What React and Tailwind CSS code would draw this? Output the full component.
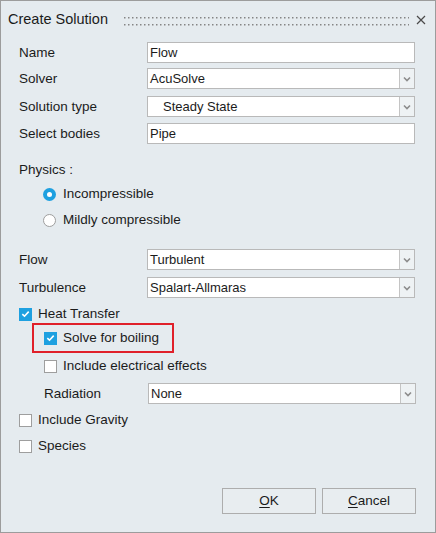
const font = { fontFamily: '"Liberation Sans", Arial, sans-serif' };

function Chevron() {
  return (
    <svg width="8" height="6" viewBox="0 0 8 6">
      <path d="M1 1.5 L4 4.5 L7 1.5" fill="none" stroke="#8c8c8c" strokeWidth="1.6" />
    </svg>
  );
}

function TextField({ value, className = '' }) {
  return (
    <div className={`flex h-[21px] w-[268px] items-center border border-[#b9b9b9] bg-white pl-[2px] text-[13px] text-[#1b1b1b] ${className}`}>
      {value}
    </div>
  );
}

function Select({ value, indent = false, className = '' }) {
  return (
    <div className={`flex h-[21px] w-[268px] border border-[#b9b9b9] bg-white text-[13px] text-[#1b1b1b] ${className}`}>
      <div className={`flex flex-1 items-center border-r border-[#c4c4c4] ${indent ? 'pl-[15px]' : 'pl-[2px]'}`}>{value}</div>
      <div className="flex w-[14px] items-center justify-center bg-[#eef2f4]">
        <Chevron />
      </div>
    </div>
  );
}

function Row({ label, children, className = '', labelW = 'w-[128px]' }) {
  return (
    <div className={`flex h-[21px] items-center ${className}`}>
      <div className={`${labelW} pt-[1px] text-[13.5px] leading-[16px] text-[#1b1b1b]`}>{label}</div>
      {children}
    </div>
  );
}

function Check({ checked }) {
  if (checked) {
    return (
      <div className="flex h-[13px] w-[13px] items-center justify-center bg-[#1ea0e0]">
        <svg width="9" height="8" viewBox="0 0 9 8">
          <path d="M1.3 4.2 L3.5 6.2 L7.7 1.6" fill="none" stroke="white" strokeWidth="1.6" />
        </svg>
      </div>
    );
  }
  return <div className="h-[13px] w-[13px] border border-[#9e9e9e] bg-white" />;
}

function CheckRow({ checked, label, className = '' }) {
  return (
    <div className={`flex h-[16px] items-center gap-[6px] text-[13.5px] text-[#1b1b1b] ${className}`}>
      <Check checked={checked} />
      <span>{label}</span>
    </div>
  );
}

function Radio({ checked, label, className = '' }) {
  return (
    <div className={`flex h-[16px] items-center gap-[7px] pl-[24px] text-[13.5px] text-[#1b1b1b] ${className}`}>
      {checked ? (
        <div className="flex h-[13px] w-[13px] items-center justify-center rounded-full bg-[#1ea0e0]">
          <div className="h-[5px] w-[5px] rounded-full bg-white" />
        </div>
      ) : (
        <div className="h-[13px] w-[13px] rounded-full border border-[#9e9e9e] bg-white" />
      )}
      <span>{label}</span>
    </div>
  );
}

export default function App() {
  return (
    <div style={font} className="h-[533px] w-[436px] border border-[#9c9c9c] bg-[#e5ebef]">
      {/* title bar */}
      <div className="flex h-[37px] items-center pl-[7px] pr-[9px]">
        <span className="text-[14.5px] text-[#1b1b1b]">Create Solution</span>
        <svg className="ml-[15px]" width="286" height="12" viewBox="0 0 286 12">
          <defs>
            <pattern id="dots" width="4" height="7" patternUnits="userSpaceOnUse">
              <rect x="1" y="3" width="1.5" height="1.5" fill="#858585" />
            </pattern>
          </defs>
          <rect width="286" height="12" fill="url(#dots)" />
        </svg>
        <svg className="ml-auto" width="10" height="10" viewBox="0 0 10 10">
          <path d="M1 1 L9 9 M9 1 L1 9" stroke="#4a4a4a" strokeWidth="1.2" />
        </svg>
      </div>

      <div className="flex flex-col pl-[18px]">
        <Row label="Name" className="mt-[4px]">
          <TextField value="Flow" />
        </Row>
        <Row label="Solver" className="mt-[5px]">
          <Select value="AcuSolve" />
        </Row>
        <Row label="Solution type" className="mt-[7px]">
          <Select value="Steady State" indent />
        </Row>
        <Row label="Select bodies" className="mt-[6px]">
          <TextField value="Pipe" />
        </Row>

        <div className="mt-[18px] h-[16px] text-[13.5px] leading-[16px] text-[#1b1b1b]">Physics :</div>
        <Radio checked label="Incompressible" className="mt-[8px]" />
        <Radio label="Mildly compressible" className="mt-[10px]" />

        <Row label="Flow" className="mt-[21px]">
          <Select value="Turbulent" />
        </Row>
        <Row label="Turbulence" className="mt-[7px]">
          <Select value="Spalart-Allmaras" />
        </Row>

        <CheckRow checked label="Heat Transfer" className="mt-[8px]" />
        <div className="ml-[13px] mt-[1px] flex h-[30px] w-[142px] items-center border-2 border-[#e0202a] pl-[10px]">
          <CheckRow checked label="Solve for boiling" />
        </div>
        <CheckRow label="Include electrical effects" className="ml-[25px] mt-[5px]" />
        <Row label="Radiation" labelW="w-[104px]" className="ml-[25px] mt-[9px]">
          <Select value="None" />
        </Row>
        <CheckRow label="Include Gravity" className="mt-[8px]" />
        <CheckRow label="Species" className="mt-[10px]" />

        <div className="mt-[34px] flex justify-end gap-[6px] pr-[19px]">
          <button className="h-[26px] w-[94px] border border-[#adadad] bg-[#e8edf0] text-[13.5px] text-[#1b1b1b]">
            <span className="underline underline-offset-2">O</span>K
          </button>
          <button className="h-[26px] w-[94px] border border-[#adadad] bg-[#e8edf0] text-[13.5px] text-[#1b1b1b]">
            <span className="underline underline-offset-2">C</span>ancel
          </button>
        </div>
      </div>
    </div>
  );
}
